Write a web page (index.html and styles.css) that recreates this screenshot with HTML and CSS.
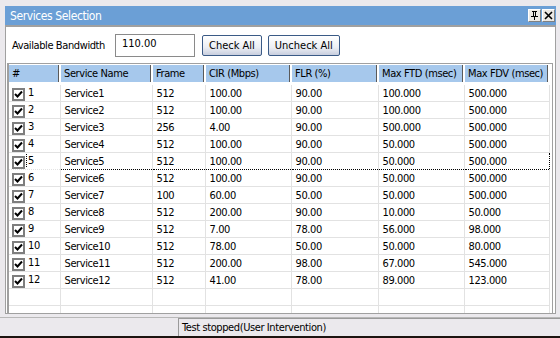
FILE: index.html
```html
<!DOCTYPE html>
<html lang="en">
  <head>
    <meta charset="UTF-8" />
    <title>Services Selection</title>
    <link rel="stylesheet" href="styles.css">
  </head>
  <body>
    <div class="window">
      <div class="title">
        <span>Services Selection</span>
        <div class="title-btns">
          <span class="tbtn">
            <svg width="9" height="9" viewBox="0 0 9 9"><path d="M2 0h5v1H6v4h2v1H5v3H4V6H1V5h2V1H2z M4 1v4h1V1z" fill="#000"/></svg>
          </span>
          <span class="tbtn">
            <svg width="9" height="9" viewBox="0 0 9 9"><path d="M1 1l7 7M8 1L1 8" stroke="#000" stroke-width="1.6"/></svg>
          </span>
        </div>
      </div>
      <div class="panel">
        <div class="toolbar">
          <label for="bw">Available Bandwidth</label>
          <input type="text" id="bw" value="110.00" />
          <button>Check All</button>
          <button>Uncheck All</button>
        </div>
        <div class="grid">
          <table>
            <colgroup>
              <col style="width:51px" /><col style="width:92px" /><col style="width:53px" />
              <col style="width:86px" /><col style="width:87px" /><col style="width:86px" /><col style="width:85px" />
            </colgroup>
            <thead>
              <tr>
                <th>#</th><th>Service Name</th><th>Frame</th><th>CIR (Mbps)</th>
                <th>FLR (%)</th><th>Max FTD (msec)</th><th>Max FDV (msec)</th>
              </tr>
            </thead>
            <tbody id="rows"></tbody>
          </table>
        </div>
      </div>
      <div class="status">
        <div class="status-left"></div>
        <div class="status-right">Test stopped(User Intervention)</div>
      </div>
    </div>
    <script>
      const services = [
        [512, "100.00", "90.00", "100.000", "500.000"],
        [512, "100.00", "90.00", "100.000", "500.000"],
        [256, "4.00", "90.00", "500.000", "500.000"],
        [512, "100.00", "90.00", "50.000", "500.000"],
        [512, "100.00", "90.00", "50.000", "500.000"],
        [512, "100.00", "90.00", "50.000", "500.000"],
        [100, "60.00", "50.00", "50.000", "500.000"],
        [512, "200.00", "90.00", "10.000", "50.000"],
        [512, "7.00", "78.00", "56.000", "98.000"],
        [512, "78.00", "50.00", "50.000", "80.000"],
        [512, "200.00", "98.00", "67.000", "545.000"],
        [512, "41.00", "78.00", "89.000", "123.000"]
      ];
      const check = '<span class="cb"><svg width="9" height="9" viewBox="0 0 9 9"><path d="M1 4l2.5 2.5L8 1.5" stroke="#000" stroke-width="2" fill="none"/></svg></span>';
      const tbody = document.getElementById("rows");
      let html = "";
      services.forEach((s, i) => {
        const n = i + 1;
        html += '<tr' + (n === 5 ? ' class="focus"' : '') + '>' +
          '<td class="num">' + check + '<span class="n">' + n + '</span></td>' +
          '<td>Service' + n + '</td><td>' + s[0] + '</td><td>' + s[1] + '</td>' +
          '<td>' + s[2] + '</td><td>' + s[3] + '</td><td>' + s[4] + '</td></tr>';
      });
      for (let i = 0; i < 2; i++) {
        html += '<tr class="empty"><td></td><td></td><td></td><td></td><td></td><td></td><td></td></tr>';
      }
      tbody.innerHTML = html;
    </script>
  </body>
</html>
```

FILE: styles.css
```css
html, body {
  margin: 0;
  padding: 0;
}
body {
  width: 560px;
  height: 338px;
  overflow: hidden;
  background: #ebe9ed;
  font-family: "DejaVu Sans Condensed", "DejaVu Sans", sans-serif;
  font-stretch: condensed;
  font-size: 11px;
  letter-spacing: -0.4px;
  color: #000;
  border-bottom: 2px solid #1c1410;
  box-sizing: border-box;
}
.window {
  padding-top: 6px;
}
.title {
  margin: 0 4px 0 5px;
  height: 19px;
  background: #6b9fd6;
  color: #fff;
  font-size: 12px;
  display: flex;
  align-items: center;
  justify-content: space-between;
  padding-left: 5px;
}
.title-btns {
  display: flex;
  gap: 1px;
  margin-right: 1px;
}
.tbtn {
  width: 13px;
  height: 13px;
  background: #ece9e4;
  border: 1px solid;
  border-color: #fff #808080 #808080 #fff;
  box-sizing: border-box;
  display: flex;
  align-items: center;
  justify-content: center;
}
.panel {
  margin: 0 4px 0 5px;
  height: 289px;
  background: #fff;
  border: 1px solid #a0a0a0;
  border-top: 2px solid #a0a0a0;
  box-sizing: border-box;
  overflow: hidden;
}
.toolbar {
  display: flex;
  align-items: center;
  height: 36px;
  padding-left: 6px;
}
.toolbar label {
  margin-right: 10px;
}
.toolbar input {
  width: 80px;
  height: 23px;
  box-sizing: border-box;
  border: 1px solid #8a8a8a;
  font: inherit;
  font-size: 11px;
  padding: 0 0 4px 6px;
  margin-right: 7px;
}
.toolbar button {
  height: 21px;
  font: inherit;
  font-size: 11px;
  padding: 0 6px;
  margin-right: 6px;
  border: 1px solid #3a5a86;
  border-radius: 2px;
  background: linear-gradient(#ffffff, #eceef4 60%, #c8cede);
  color: #000;
}
.grid {
  margin-left: 1px;
  width: 546px;
  border: 1px solid #a0a0a0;
  border-left: 2px solid #a0a0a0;
  border-bottom: none;
  height: 260px;
  box-sizing: border-box;
  overflow: hidden;
}
table {
  border-collapse: collapse;
  table-layout: fixed;
  width: 540px;
  margin-top: 1px;
}
th {
  height: 17px;
  background: #a6c8ec;
  font-weight: normal;
  text-align: left;
  padding: 0 0 0 3px;
  border-right: 2px solid #fff;
  box-shadow: inset -1px 0 0 #5a5a5a;
  white-space: nowrap;
  overflow: hidden;
}
td {
  height: 16px;
  padding: 0 0 0 4px;
  border-right: 1px solid #e2e2e2;
  border-bottom: 1px solid #e2e2e2;
  white-space: nowrap;
}
tbody tr:first-child td {
  border-top: 3px solid #fff;
}
td.num {
  padding-left: 3px;
}
.cb {
  display: inline-flex;
  align-items: center;
  justify-content: center;
  width: 13px;
  height: 13px;
  box-sizing: border-box;
  border: 2px solid #7e7e7e;
  background: #fff;
  vertical-align: -3px;
}
.n {
  margin-left: 3px;
}
tr.focus td {
  border-top: 1px dotted #000;
  border-bottom: 1px dotted #000;
}
tr.focus td.num {
  border-top-color: #e2e2e2;
  border-bottom-color: #e2e2e2;
}
tr.focus .n {
  border-left: 1px dotted #000;
  margin-left: 1px;
  padding-left: 1px;
}
tr.focus td:last-child {
  border-right: 1px dotted #000;
}
.status {
  display: flex;
  margin-top: 3px;
  height: 18px;
  border-top: 1px solid #b8b8b8;
}
.status-left {
  width: 178px;
}
.status-right {
  flex: 1;
  border-left: 1px solid #9a9a9a;
  border-top: 1px solid #9a9a9a;
  padding: 2px 0 0 3px;
}
```
